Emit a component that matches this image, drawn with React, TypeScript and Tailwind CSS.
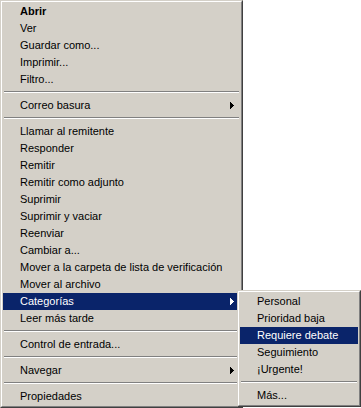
import React from 'react';

type Entry = { label: string; bold?: boolean; arrow?: boolean; active?: boolean } | 'sep';

const MAIN: Entry[] = [
  { label: 'Abrir', bold: true },
  { label: 'Ver' },
  { label: 'Guardar como...' },
  { label: 'Imprimir...' },
  { label: 'Filtro...' },
  'sep',
  { label: 'Correo basura', arrow: true },
  'sep',
  { label: 'Llamar al remitente' },
  { label: 'Responder' },
  { label: 'Remitir' },
  { label: 'Remitir como adjunto' },
  { label: 'Suprimir' },
  { label: 'Suprimir y vaciar' },
  { label: 'Reenviar' },
  { label: 'Cambiar a...' },
  { label: 'Mover a la carpeta de lista de verificación' },
  { label: 'Mover al archivo' },
  { label: 'Categorías', arrow: true, active: true },
  { label: 'Leer más tarde' },
  'sep',
  { label: 'Control de entrada...' },
  'sep',
  { label: 'Navegar', arrow: true },
  'sep',
  { label: 'Propiedades' },
];

const SUB: Entry[] = [
  { label: 'Personal' },
  { label: 'Prioridad baja' },
  { label: 'Requiere debate', active: true },
  { label: 'Seguimiento' },
  { label: '¡Urgente!' },
  'sep',
  { label: 'Más...' },
];

const Arrow = ({ white }: { white?: boolean }) => (
  <svg width="4" height="7" viewBox="0 0 4 7" shapeRendering="crispEdges" className={white ? 'fill-white' : 'fill-black'}>
    <rect x="0" y="0" width="1" height="7" />
    <rect x="1" y="1" width="1" height="5" />
    <rect x="2" y="2" width="1" height="3" />
    <rect x="3" y="3" width="1" height="1" />
  </svg>
);

const Menu = ({ items, className }: { items: Entry[]; className: string }) => (
  <div className={`border border-t-[#d4d0c8] border-l-[#d4d0c8] border-r-[#404040] border-b-[#404040] bg-[#d4d0c8] ${className}`}>
    <div className="border border-t-white border-l-white border-r-[#808080] border-b-[#808080] p-px">
      {items.map((it, i) =>
        it === 'sep' ? (
          <div key={i} className="h-[9px] pt-[3px] px-px">
            <div className="h-px bg-[#808080]" />
            <div className="h-px bg-white" />
          </div>
        ) : (
          <div
            key={i}
            className={`flex items-center justify-between h-[17px] pl-[17px] pr-[6px] leading-[17px] whitespace-nowrap ${
              it.active ? 'bg-[#0a246a] text-white' : 'text-black'
            } ${it.bold ? 'font-bold' : ''}`}
          >
            <span>{it.label}</span>
            {it.arrow && <Arrow white={it.active} />}
          </div>
        )
      )}
    </div>
  </div>
);

export default function App() {
  return (
    <div className="relative w-[361px] h-[408px] bg-white overflow-hidden text-[11px] font-['Liberation_Sans',Arial,sans-serif]">
      <Menu items={MAIN} className="w-[243px]" />
      <Menu items={SUB} className="absolute left-[237px] top-[290px] w-[124px]" />
    </div>
  );
}
